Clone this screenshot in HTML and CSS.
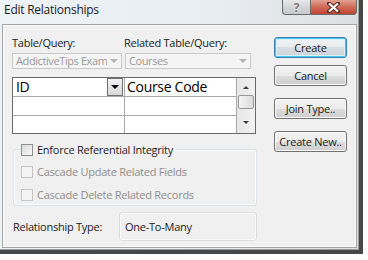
FILE: index.html
```html
<!DOCTYPE html>
<html lang="en">

<head>
    <meta charset="UTF-8">
    <title>Edit Relationships</title>
    <link rel="stylesheet" href="styles.css">
</head>

<body>
    <div class="frame">
        <div class="window">
            <div class="titlebar">
                <span class="title">Edit Relationships</span>
                <div class="caption-btns">
                    <span class="cap help">?</span>
                    <span class="cap close">
                        <svg width="13" height="11" viewBox="0 0 13 11">
                            <path d="M2 1.5 L11 9.5 M11 1.5 L2 9.5" stroke="#5a2a22" stroke-width="4" stroke-linecap="square" fill="none"/>
                            <path d="M2 1.5 L11 9.5 M11 1.5 L2 9.5" stroke="#fff" stroke-width="2.2" fill="none"/>
                        </svg>
                    </span>
                </div>
            </div>

            <div class="client">
                <div class="main">
                    <div class="labels">
                        <span class="lbl-left">Table/Query:</span>
                        <span>Related Table/Query:</span>
                    </div>
                    <div class="combos">
                        <div class="combo combo-left"><span class="combo-text">AddictiveTips Exam</span><span class="arrow"></span></div>
                        <div class="combo combo-right"><span class="combo-text">Courses</span><span class="arrow"></span></div>
                    </div>

                    <div class="grid">
                        <div class="cells">
                            <div class="cell col1">ID<span class="drop"><span class="tri"></span></span></div>
                            <div class="cell col2">Course Code</div>
                            <div class="cell col1"></div>
                            <div class="cell col2"></div>
                            <div class="cell col1 last"></div>
                            <div class="cell col2 last"></div>
                        </div>
                        <div class="scrollbar">
                            <span class="sarrow up"></span>
                            <span class="thumb"></span>
                            <span class="sarrow down"></span>
                        </div>
                    </div>

                    <fieldset class="group">
                        <legend><span class="check"></span>Enforce Referential Integrity</legend>
                        <div class="opt disabled"><span class="check"></span>Cascade Update Related Fields</div>
                        <div class="opt disabled second"><span class="check"></span>Cascade Delete Related Records</div>
                    </fieldset>

                    <div class="reltype">
                        <span class="rel-label">Relationship Type:</span>
                        <div class="relbox">One-To-Many</div>
                    </div>
                </div>

                <div class="buttons">
                    <button class="btn default">Create</button>
                    <button class="btn">Cancel</button>
                    <button class="btn spaced">Join Type..</button>
                    <button class="btn spaced">Create New..</button>
                </div>
            </div>
        </div>
    </div>
</body>

</html>
```

FILE: styles.css
```css
body {
    margin: 0;
    background: #fff;
    font-family: "Open Sans", "Noto Sans", sans-serif;
    font-size: 11px;
    letter-spacing: -0.25px;
    color: #1b1b1b;
}

.frame {
    width: 363px;
    height: 254px;
    box-sizing: border-box;
    border-right: 4px solid #474747;
    border-bottom: 4px solid #474747;
}

.window {
    height: 100%;
    box-sizing: border-box;
    padding: 0 0 0 2px;
    border-right: 1px solid #9c9c9c;
    border-bottom: 1px solid #9c9c9c;
    background: linear-gradient(90deg, #eef3f7, #e8edf1 60%, #dcdfe2);
}

/* title bar */
.titlebar {
    height: 24px;
    display: flex;
    justify-content: space-between;
    align-items: flex-start;
}

.title {
    font-size: 12px;
    line-height: 16px;
    padding: 2px 0 0 2px;
    color: #1a1a1a;
}

.caption-btns {
    display: flex;
    margin-right: 1px;
}

.cap {
    height: 15px;
    box-sizing: border-box;
    display: flex;
    align-items: center;
    justify-content: center;
    border: 1px solid #6b6b6b;
    border-top: none;
}

.help {
    width: 28px;
    border-right: none;
    border-radius: 0 0 0 4px;
    background: linear-gradient(#e9eaeb, #d3d5d7 50%, #c6c8ca);
    color: #7a7a7a;
    font-weight: bold;
    font-size: 12px;
    text-shadow: 0 0 2px #fff;
}

.close {
    width: 47px;
    border-radius: 0 0 4px 0;
    background: linear-gradient(#e4a193, #d06b58 50%, #c0422f);
}

/* client area */
.client {
    height: 224px;
    width: 355px;
    box-sizing: border-box;
    border: 1px solid #a4a4a4;
    box-shadow: inset 0 0 0 1px #fbfbfb;
    background: #f0f0f0;
    display: flex;
    padding: 10px 0 0 9px;
}

.main {
    width: 245px;
}

.labels {
    display: flex;
    line-height: 15px;
}

.lbl-left {
    width: 112px;
}

.combos {
    display: flex;
    margin-top: 3px;
    height: 16px;
}

.combo {
    box-sizing: border-box;
    height: 16px;
    border: 1px solid #cacaca;
    background: #f4f4f4;
    color: #9a9a9a;
    line-height: 14px;
    letter-spacing: -0.4px;
    padding-left: 3px;
    display: flex;
    justify-content: space-between;
    align-items: center;
    white-space: nowrap;
    overflow: hidden;
}

.combo-text {
    overflow: hidden;
}

.combo-left {
    width: 110px;
}

.combo-right {
    width: 126px;
    margin-left: 3px;
}

.arrow {
    flex: none;
    width: 0;
    height: 0;
    margin-right: 3px;
    border-left: 4px solid transparent;
    border-right: 4px solid transparent;
    border-top: 4px solid #b4b4b4;
}

/* field grid */
.grid {
    margin-top: 8px;
    width: 244px;
    height: 57px;
    box-sizing: border-box;
    border: 1px solid #6a6a6a;
    background: #fff;
    display: flex;
}

.cells {
    display: grid;
    grid-template-columns: 112px 112px;
    grid-template-rows: 19px 19px 17px;
}

.cell {
    box-sizing: border-box;
    border-bottom: 1px solid #a9a9a9;
    border-right: 1px solid #a9a9a9;
    font-size: 14px;
    letter-spacing: -0.3px;
    line-height: 18px;
    color: #000;
    display: flex;
    justify-content: space-between;
    align-items: flex-start;
}

.col1 {
    padding-left: 3px;
}

.col2 {
    padding-left: 2px;
}

.cell.last {
    border-bottom: none;
}

.drop {
    width: 16px;
    height: 18px;
    box-sizing: border-box;
    margin-right: 1px;
    border: 1px solid #6f6f6f;
    background: linear-gradient(#f2f2f2, #d8d8d8);
    display: flex;
    align-items: center;
    justify-content: center;
}

.tri {
    width: 0;
    height: 0;
    border-left: 4px solid transparent;
    border-right: 4px solid transparent;
    border-top: 4px solid #000;
}

.scrollbar {
    width: 18px;
    background: linear-gradient(90deg, #e6e6e6, #f3f3f3);
    display: flex;
    flex-direction: column;
    align-items: center;
}

.sarrow {
    width: 0;
    height: 0;
    border-left: 3px solid transparent;
    border-right: 3px solid transparent;
}

.up {
    margin-top: 8px;
    border-bottom: 3px solid #3e3e3e;
}

.thumb {
    width: 16px;
    height: 14px;
    margin-top: 6px;
    box-sizing: border-box;
    border: 1px solid #979797;
    border-radius: 2px;
    background: linear-gradient(90deg, #f4f4f4, #dcdcdc);
}

.down {
    margin-top: 12px;
    border-top: 3px solid #3e3e3e;
}

/* referential integrity group */
.group {
    margin: 8px 0 0 1px;
    width: 244px;
    height: 64px;
    box-sizing: border-box;
    padding: 0 0 0 7px;
    border: 1px solid #dde2e6;
    border-radius: 3px;
    box-shadow: inset 0 0 0 1px #fbfbfb;
}

.group legend {
    padding: 0 2px 0 0;
    line-height: 15px;
    display: flex;
    align-items: center;
}

.check {
    width: 12px;
    height: 12px;
    box-sizing: border-box;
    margin-right: 4px;
    border: 1px solid #8e8f8f;
    background: linear-gradient(135deg, #dcdcdc, #f8f8f8);
    display: inline-block;
}

.opt {
    line-height: 15px;
    margin-top: 7px;
    display: flex;
    align-items: center;
}

.opt.second {
    margin-top: 8px;
}

.disabled {
    color: #8f8f8f;
}

.disabled .check {
    border-color: #c6c6c6;
    background: #f4f4f4;
}

.reltype {
    margin-top: 6px;
    display: flex;
    align-items: center;
}

.rel-label {
    width: 106px;
    padding-left: 1px;
}

.relbox {
    width: 138px;
    height: 29px;
    box-sizing: border-box;
    border: 1px solid #dcdcdc;
    border-radius: 3px;
    box-shadow: inset 0 0 0 1px #fafafa;
    padding-left: 5px;
    line-height: 27px;
}

/* buttons */
.buttons {
    margin-left: 17px;
    padding-top: 2px;
    display: flex;
    flex-direction: column;
    gap: 7px;
}

.btn {
    width: 73px;
    height: 21px;
    padding: 0;
    font-family: inherit;
    font-size: 11px;
    letter-spacing: -0.25px;
    color: #1b1b1b;
    border: 1px solid #707070;
    border-radius: 3px;
    background: linear-gradient(#f3f3f3, #ebebeb 50%, #dddddd 50%, #cfcfcf);
    box-shadow: inset 0 0 0 1px #fbfbfb;
}

.btn.default {
    border-color: #3c7fb1;
    box-shadow: inset 0 0 0 1px #48c8f0, inset 0 0 0 2px #d8f0fa;
    background: linear-gradient(#f1f4f6, #e8ecef 50%, #d9dee2 50%, #cdd3d8);
}

.btn.spaced {
    margin-top: 5px;
}
```
